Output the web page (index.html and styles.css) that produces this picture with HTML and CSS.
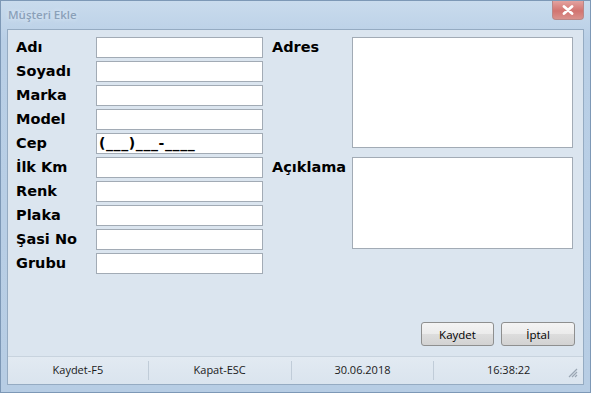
FILE: index.html
```html
<!DOCTYPE html>
<html lang="tr">
<head>
<meta charset="utf-8">
<title>Müşteri Ekle</title>
<link rel="stylesheet" href="styles.css">
</head>
<body>
<div class="window">
  <div class="titlebar">
    <span class="title">Müşteri Ekle</span>
    <div class="close">
      <svg width="14" height="10" viewBox="0 0 14 10"><path d="M3 1.5 L11 8.5 M11 1.5 L3 8.5" stroke="#fff" stroke-width="2.8" stroke-linecap="round"/></svg>
    </div>
  </div>
  <div class="client">
    <div class="content">
      <div class="form-left">
        <label class="lbl">Adı</label><div class="inp"></div>
        <label class="lbl">Soyadı</label><div class="inp"></div>
        <label class="lbl">Marka</label><div class="inp"></div>
        <label class="lbl">Model</label><div class="inp"></div>
        <label class="lbl">Cep</label><div class="inp mask">(___)___-____</div>
        <label class="lbl">İlk Km</label><div class="inp"></div>
        <label class="lbl">Renk</label><div class="inp"></div>
        <label class="lbl">Plaka</label><div class="inp"></div>
        <label class="lbl">Şasi No</label><div class="inp"></div>
        <label class="lbl">Grubu</label><div class="inp"></div>
      </div>
      <div class="form-right">
        <label class="lbl">Adres</label><div class="area area-adres"></div>
        <label class="lbl">Açıklama</label><div class="area area-aciklama"></div>
      </div>
    </div>
    <div class="buttons">
      <button class="btn btn-kaydet">Kaydet</button>
      <button class="btn btn-iptal">İptal</button>
    </div>
    <div class="statusbar">
      <div class="panel">Kaydet-F5</div>
      <div class="panel">Kapat-ESC</div>
      <div class="panel">30.06.2018</div>
      <div class="panel last">16:38:22</div>
      <svg class="grip" width="12" height="12" viewBox="0 0 12 12"><path d="M11 3 L3 11 M11 6 L6 11 M11 9 L9 11" stroke="#9aa6b3" stroke-width="1.2"/></svg>
    </div>
  </div>
</div>
</body>
</html>
```

FILE: styles.css
```css
html, body {
  margin: 0;
  padding: 0;
  background: #ffffff;
}
.window {
  width: 591px;
  height: 393px;
  box-sizing: border-box;
  border: 1px solid #7d98b6;
  background: linear-gradient(#c9dbed, #b9cfe6 40px, #b7cde4);
  display: flex;
  flex-direction: column;
}
.titlebar {
  height: 28px;
  flex: none;
  display: flex;
  align-items: flex-start;
  justify-content: space-between;
}
.title {
  font-family: "Open Sans", "Liberation Sans", sans-serif;
  font-size: 11.5px;
  font-weight: 600;
  color: #8aa0b9;
  padding: 6px 0 0 7px;
  text-shadow: 0 0 4px #e4eef8;
}
.close {
  width: 32px;
  height: 19px;
  margin-right: 6px;
  box-sizing: border-box;
  border: 1px solid #b98787;
  border-top: none;
  border-radius: 0 0 4px 4px;
  background: linear-gradient(#e3a3a0, #d27470 55%, #d9918c);
  display: flex;
  align-items: center;
  justify-content: center;
}
.client {
  flex: 1;
  margin: 0 6px 7px 6px;
  box-sizing: border-box;
  border: 1px solid #95abc2;
  background: #dbe5ef;
  display: flex;
  flex-direction: column;
}
.content {
  display: flex;
  padding: 7px 0 0 8px;
  gap: 9px;
}
.form-left {
  display: grid;
  grid-template-columns: 80px 167px;
  grid-auto-rows: 21px;
  row-gap: 3px;
}
.form-right {
  display: grid;
  grid-template-columns: 80px 221px;
  grid-template-rows: 111px 92px;
  row-gap: 9px;
}
.lbl {
  font-family: "DejaVu Sans", Verdana, sans-serif;
  font-weight: bold;
  font-size: 14.5px;
  color: #000;
  line-height: 21px;
}
.inp, .area {
  box-sizing: border-box;
  background: #fff;
  border: 1px solid #a2abb5;
}
.mask {
  font-family: "DejaVu Sans", Verdana, sans-serif;
  font-weight: bold;
  font-size: 14px;
  line-height: 19px;
  padding-left: 2px;
  color: #000;
  letter-spacing: 0.6px;
}
.buttons {
  display: flex;
  justify-content: flex-end;
  gap: 7px;
  margin-top: auto;
  padding: 0 8px 10px 0;
}
.btn {
  height: 24px;
  box-sizing: border-box;
  border: 1px solid #8e8f8f;
  border-radius: 3px;
  background: linear-gradient(#f4f4f4, #ebebeb 50%, #dddddd 51%, #d2d2d2);
  font-family: "Open Sans", "Liberation Sans", sans-serif;
  font-size: 11.5px;
  color: #000;
  padding: 0;
}
.btn-kaydet { width: 73px; }
.btn-iptal { width: 74px; }
.statusbar {
  height: 27px;
  flex: none;
  border-top: 1px solid #c8d3de;
  background: linear-gradient(#e2eaf2, #dae4ee);
  display: flex;
  align-items: center;
  position: relative;
}
.panel {
  width: 143px;
  height: 19px;
  border-right: 1px solid #c0ccd8;
  font-family: "Open Sans", "Liberation Sans", sans-serif;
  font-size: 11px;
  line-height: 18px;
  text-align: center;
  color: #1a1a1a;
}
.panel:first-child { width: 141px; }
.panel.last {
  border-right: none;
  width: 150px;
}
.grip {
  position: absolute;
  right: 5px;
  bottom: 6px;
}
```
